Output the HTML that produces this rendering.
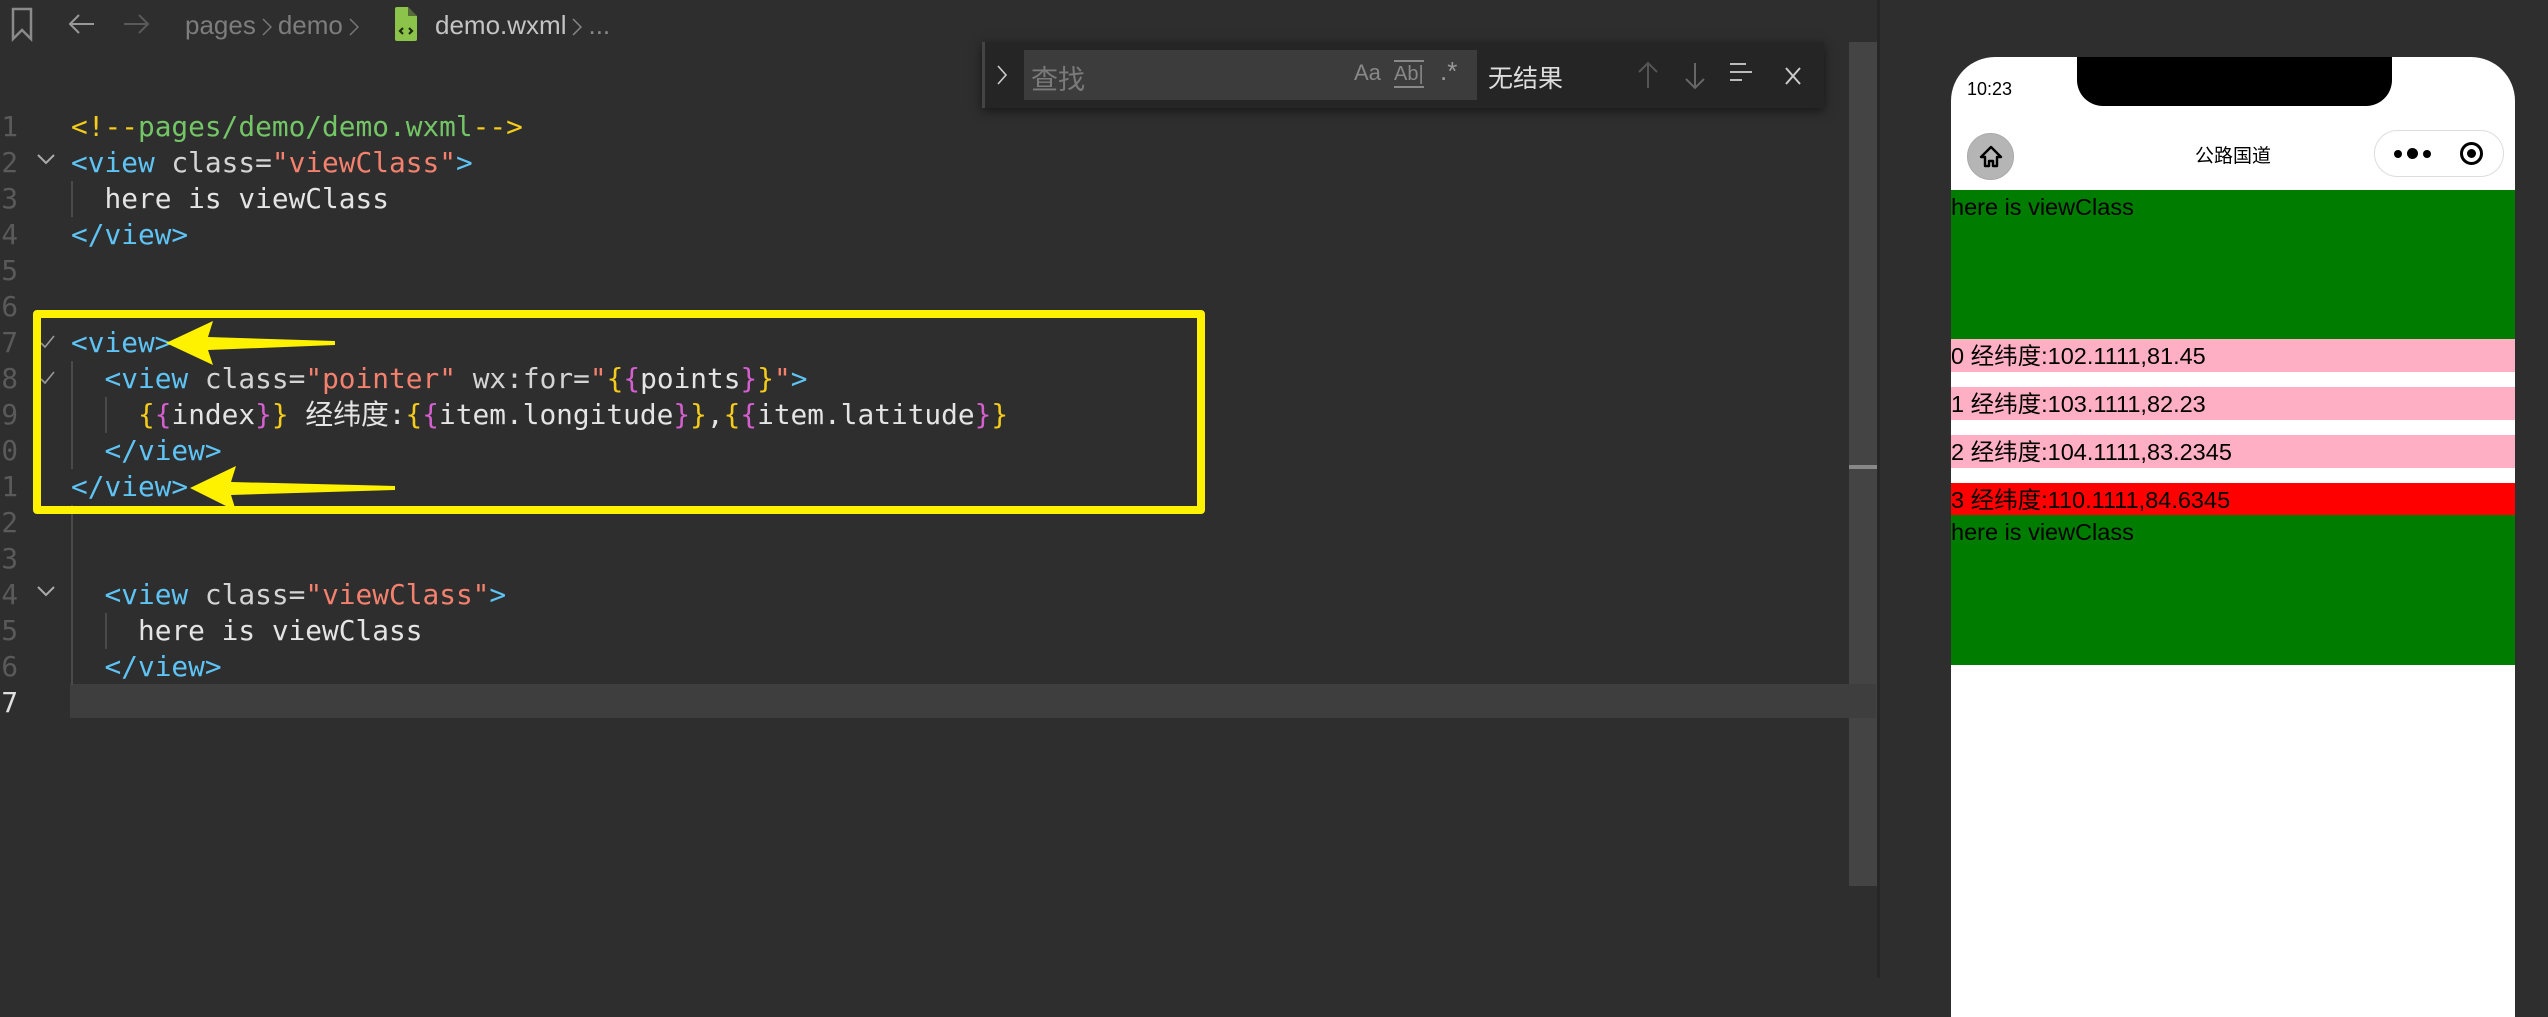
<!DOCTYPE html>
<html><head><meta charset="utf-8"><style>
*{margin:0;padding:0;box-sizing:border-box}
body{width:2548px;height:978px;background:#2e2e2e;position:relative;overflow:hidden;font-family:"Liberation Sans","Noto Sans CJK SC",sans-serif}
.abs{position:absolute}
.bc{top:8px;font-size:26px;color:#8a8a8a;line-height:34px;white-space:nowrap}
.code{font-family:"DejaVu Sans Mono","Noto Sans CJK SC",monospace;font-size:27.8px;white-space:pre;line-height:36px;color:#d4d4d4}
.ln{left:-20px;width:38px;text-align:right;color:#5a5a5a;font-family:"DejaVu Sans Mono",monospace;font-size:27.7px;line-height:36px}
.t{color:#5ec4f5}.v{color:#f4806e}.y{color:#f5cc1a}.p{color:#d65fd0}.g{color:#73c566}.w{color:#e4e4e4}
.ph{font-size:23.5px;line-height:34px;color:#000;white-space:nowrap;padding-left:0}
.chev{display:inline-block;width:10px;height:18px;vertical-align:-2px;margin:0 6px}
</style></head><body>
<!-- breadcrumb -->
<svg class="abs" style="left:10px;top:6px" width="24" height="36" viewBox="0 0 24 36"><path d="M3 3 H21 V33 L12 24 L3 33 Z" fill="none" stroke="#8a8a8a" stroke-width="2.5"/></svg>
<svg class="abs" style="left:66px;top:12px" width="30" height="24"><path d="M28 12 H4 M13 3 L4 12 L13 21" fill="none" stroke="#999" stroke-width="2"/></svg>
<svg class="abs" style="left:122px;top:12px" width="30" height="24"><path d="M2 12 H26 M17 3 L26 12 L17 21" fill="none" stroke="#5a5a5a" stroke-width="2"/></svg>
<div class="abs bc" style="left:185px;color:#7d7d7d">pages<svg class="chev" viewBox="0 0 10 18"><path d="M1 1 L9 9 L1 17" stroke="#777" stroke-width="1.5" fill="none"/></svg>demo<svg class="chev" viewBox="0 0 10 18"><path d="M1 1 L9 9 L1 17" stroke="#777" stroke-width="1.5" fill="none"/></svg></div>
<svg class="abs" style="left:395px;top:7px" width="22" height="34"><path d="M0 2 Q0 0 2 0 H13 L22 9 V32 Q22 34 20 34 H2 Q0 34 0 32Z" fill="#8cc34a"/><path d="M13 0 V9 H22" fill="#2e2e2e" opacity=".6"/><path d="M8 21 L5 24 L8 27 M14 21 L17 24 L14 27" stroke="#1e2a10" stroke-width="2.2" fill="none"/></svg>
<div class="abs bc" style="left:435px;color:#c4c4c4">demo.wxml<svg class="chev" viewBox="0 0 10 18"><path d="M1 1 L9 9 L1 17" stroke="#888" stroke-width="1.5" fill="none"/></svg><span style="color:#888">...</span></div>

<!-- editor -->
<div class="abs" style="left:1849px;top:42px;width:28px;height:844px;background:#444"></div>
<div class="abs" style="left:70px;top:684px;width:1806px;height:34px;background:#3e3e3e"></div>
<div class="abs" style="left:1849px;top:465px;width:28px;height:4px;background:#888"></div>
<div class="abs" style="left:1877px;top:0;width:3px;height:978px;background:#262626"></div>

<div class="abs" style="left:0;top:109px;width:20px;height:620px;overflow:hidden">
<div class="abs ln" style="top:0">1</div><div class="abs ln" style="top:36px">2</div><div class="abs ln" style="top:72px">3</div><div class="abs ln" style="top:108px">4</div><div class="abs ln" style="top:144px">5</div><div class="abs ln" style="top:180px">6</div><div class="abs ln" style="top:216px">7</div><div class="abs ln" style="top:252px">8</div><div class="abs ln" style="top:288px">9</div><div class="abs ln" style="top:324px">10</div><div class="abs ln" style="top:360px">11</div><div class="abs ln" style="top:396px">12</div><div class="abs ln" style="top:432px">13</div><div class="abs ln" style="top:468px">14</div><div class="abs ln" style="top:504px">15</div><div class="abs ln" style="top:540px">16</div><div class="abs ln" style="top:576px;color:#e0e0e0">17</div>
</div>
<!-- fold markers -->
<svg class="abs" style="left:34px;top:150px" width="24" height="20"><path d="M4 5 L12 13 L20 5" fill="none" stroke="#aaa" stroke-width="2"/></svg>
<svg class="abs" style="left:34px;top:582px" width="24" height="20"><path d="M4 5 L12 13 L20 5" fill="none" stroke="#aaa" stroke-width="2"/></svg>
<svg class="abs" style="left:40px;top:334px" width="16" height="16"><path d="M1 9 L5 13 L14 2" fill="none" stroke="#999" stroke-width="1.6"/></svg>
<svg class="abs" style="left:40px;top:370px" width="16" height="16"><path d="M1 9 L5 13 L14 2" fill="none" stroke="#999" stroke-width="1.6"/></svg>
<!-- indent guides -->
<div class="abs" style="left:71px;top:181px;width:2px;height:36px;background:#4a4a4a"></div>
<div class="abs" style="left:71px;top:361px;width:2px;height:108px;background:#4a4a4a"></div>
<div class="abs" style="left:105px;top:397px;width:2px;height:36px;background:#4a4a4a"></div>
<div class="abs" style="left:71px;top:505px;width:2px;height:180px;background:#4a4a4a"></div>
<div class="abs" style="left:105px;top:613px;width:2px;height:36px;background:#4a4a4a"></div>

<div class="abs code" style="left:71px;top:109px"><span class="y">&lt;!--</span><span class="g">pages/demo/demo.wxml</span><span class="y">--&gt;</span>
<span class="t">&lt;view</span> class=<span class="v">"viewClass"</span><span class="t">&gt;</span>
  <span class="w">here is viewClass</span>
<span class="t">&lt;/view&gt;</span>


<span class="t">&lt;view&gt;</span>
  <span class="t">&lt;view</span> class=<span class="v">"pointer"</span> wx:for=<span class="v">"</span><span class="y">{</span><span class="p">{</span><span class="w">points</span><span class="p">}</span><span class="y">}</span><span class="v">"</span><span class="t">&gt;</span>
    <span class="y">{</span><span class="p">{</span><span class="w">index</span><span class="p">}</span><span class="y">}</span> <span class="w">经纬度:</span><span class="y">{</span><span class="p">{</span><span class="w">item.longitude</span><span class="p">}</span><span class="y">}</span><span class="w">,</span><span class="y">{</span><span class="p">{</span><span class="w">item.latitude</span><span class="p">}</span><span class="y">}</span>
  <span class="t">&lt;/view&gt;</span>
<span class="t">&lt;/view&gt;</span>


  <span class="t">&lt;view</span> class=<span class="v">"viewClass"</span><span class="t">&gt;</span>
    <span class="w">here is viewClass</span>
  <span class="t">&lt;/view&gt;</span>
</div>

<!-- yellow annotation -->
<div class="abs" style="left:33px;top:310px;width:1172px;height:204px;border:8px solid #fff200;border-radius:4px"></div>
<svg class="abs" style="left:0;top:0" width="500" height="560"><path d="M166 343 L213 321 L208 337 L335 341 L335 345 L208 350 L213 365 Z" fill="#fff200"/><path d="M190 488 L236 466 L231 482 L395 486 L395 490 L231 495 L236 511 Z" fill="#fff200"/></svg>

<!-- find widget -->
<div class="abs" style="left:982px;top:42px;width:842px;height:66px;background:#252526;box-shadow:0 3px 10px rgba(0,0,0,.5);border-left:3px solid #444"></div>
<svg class="abs" style="left:996px;top:64px" width="12" height="22"><path d="M2 2 L10 11 L2 20" stroke="#ccc" stroke-width="1.6" fill="none"/></svg>
<div class="abs" style="left:1024px;top:50px;width:453px;height:50px;background:#3c3c3c"></div>
<div class="abs" style="left:1031px;top:58px;color:#7a7a7a;font-size:27px;font-family:'Noto Sans CJK SC',sans-serif">查找</div>
<div class="abs" style="left:1354px;top:60px;color:#888;font-size:22px">Aa</div>
<div class="abs" style="left:1394px;top:60px;color:#888;font-size:20px;border-top:2px solid #888;border-bottom:2px solid #888;line-height:24px">Ab|</div>
<div class="abs" style="left:1440px;top:56px;color:#999;font-size:26px">.*</div>
<div class="abs" style="left:1488px;top:59px;color:#ddd;font-size:25px;font-family:'Noto Sans CJK SC',sans-serif">无结果</div>
<svg class="abs" style="left:1636px;top:60px" width="180" height="32"><path d="M12 28 V3 M3 12 L12 3 L21 12" stroke="#555" stroke-width="2" fill="none"/><path d="M59 3 V28 M50 19 L59 28 L68 19" stroke="#666" stroke-width="2" fill="none"/><path d="M94 4 H110 M94 12 H116 M94 20 H106" stroke="#bbb" stroke-width="2"/><path d="M150 8 L164 24 M164 8 L150 24" stroke="#ccc" stroke-width="2"/></svg>

<!-- phone -->
<div class="abs" style="left:1951px;top:57px;width:564px;height:960px;background:#fff;border-radius:44px 44px 0 0;overflow:hidden">
 <div class="abs" style="left:126px;top:0;width:315px;height:49px;background:#000;border-radius:0 0 26px 26px"></div>
 <div class="abs" style="left:16px;top:22px;font-size:18px;color:#000">10:23</div>
 <div class="abs" style="left:312px;top:25px;font-size:17px;color:#000">100%</div>
 <div class="abs" style="left:364px;top:28px;width:36px;height:16px;border:2px solid #000;border-radius:4px;padding:2px"><div style="width:100%;height:100%;background:#000;border-radius:1px"></div></div>
 <div class="abs" style="left:401px;top:33px;width:3px;height:6px;background:#000"></div>
 <div class="abs" style="left:16px;top:76px;width:47px;height:47px;border-radius:50%;background:#b5b5b5;border:1px solid #aaa"></div>
 <svg class="abs" style="left:27px;top:87px" width="26" height="26"><path d="M13 3 L23 13 H19 V22 H15 V17 H11 V22 H7 V13 H3 Z" fill="none" stroke="#000" stroke-width="2.4" stroke-linejoin="round"/></svg>
 <div class="abs" style="left:0;width:564px;text-align:center;top:84px;font-size:19px;color:#000;font-family:'Noto Sans CJK SC',sans-serif">公路国道</div>
 <div class="abs" style="left:423px;top:73px;width:130px;height:47px;border:1.5px solid #ddd;border-radius:24px"></div>
 <div class="abs" style="left:443px;top:93px;width:8px;height:8px;border-radius:50%;background:#000"></div>
 <div class="abs" style="left:456px;top:91px;width:11px;height:11px;border-radius:50%;background:#000"></div>
 <div class="abs" style="left:472px;top:93px;width:8px;height:8px;border-radius:50%;background:#000"></div>
 <div class="abs" style="left:509px;top:85px;width:23px;height:23px;border-radius:50%;border:3px solid #000"></div>
 <div class="abs" style="left:516px;top:92px;width:9px;height:9px;border-radius:50%;background:#000"></div>

 <div class="abs ph" style="left:0;top:133px;width:564px;height:149px;background:#007c00">here is viewClass</div>
 <div class="abs ph" style="left:0;top:282px;width:564px;height:33px;background:#ffafc3">0 经纬度:102.1111,81.45</div>
 <div class="abs ph" style="left:0;top:330px;width:564px;height:33px;background:#ffafc3">1 经纬度:103.1111,82.23</div>
 <div class="abs ph" style="left:0;top:378px;width:564px;height:33px;background:#ffafc3">2 经纬度:104.1111,83.2345</div>
 <div class="abs ph" style="left:0;top:426px;width:564px;height:32px;background:#ff0000">3 经纬度:110.1111,84.6345</div>
 <div class="abs ph" style="left:0;top:458px;width:564px;height:150px;background:#007c00">here is viewClass</div>
</div>
</body></html>
